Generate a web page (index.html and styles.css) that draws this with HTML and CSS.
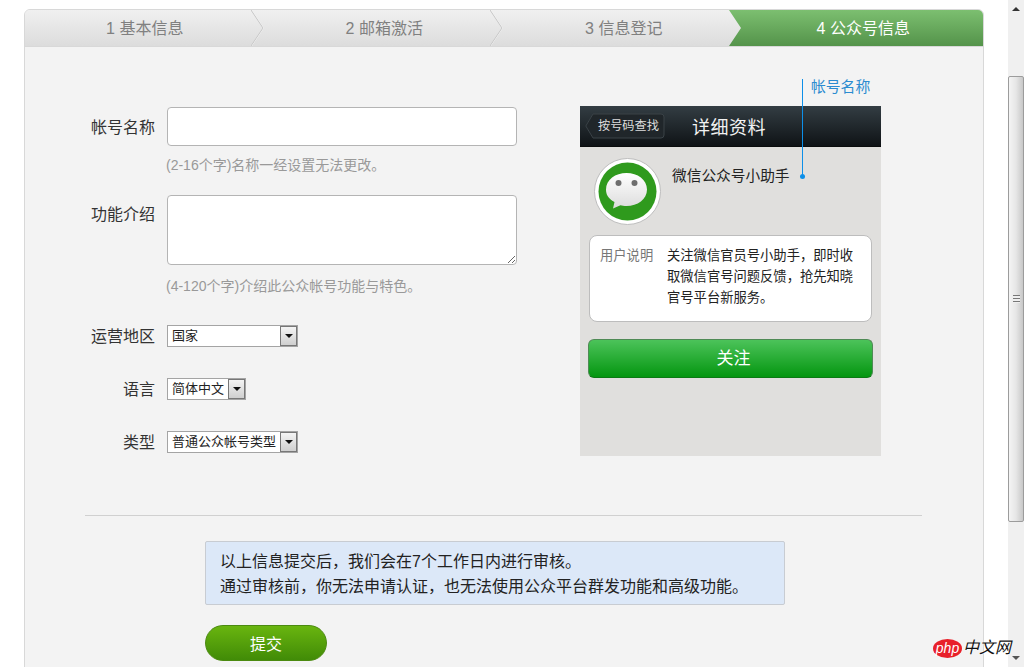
FILE: index.html
```html
<!DOCTYPE html>
<html lang="zh-CN">
  <head>
    <meta charset="UTF-8" />
    <meta name="viewport" content="width=device-width, initial-scale=1.0" />
    <title>公众号信息</title>
    <link rel="stylesheet" href="styles.css">
  </head>
  <body>
    <div class="page">
      <div class="wrap">
        <div class="card">
          <!-- steps -->
          <div class="steps">
            <div class="step">1 基本信息
              <svg class="chevron" width="14" height="36" viewBox="0 0 14 36"><polyline points="0.5,0 12.5,18 0.5,36" fill="none" stroke="#f7f7f7" stroke-width="1"/><polyline points="0,0 12,18 0,36" fill="none" stroke="#c6c6c6" stroke-width="1"/></svg>
            </div>
            <div class="step">2 邮箱激活
              <svg class="chevron" width="14" height="36" viewBox="0 0 14 36"><polyline points="0.5,0 12.5,18 0.5,36" fill="none" stroke="#f7f7f7" stroke-width="1"/><polyline points="0,0 12,18 0,36" fill="none" stroke="#c6c6c6" stroke-width="1"/></svg>
            </div>
            <div class="step">3 信息登记</div>
            <div class="step step-active">4 公众号信息
              <svg class="notch" width="15" height="36" viewBox="0 0 15 36">
                <defs>
                  <linearGradient id="stepGreen" x1="0" y1="0" x2="0" y2="1">
                    <stop offset="0" stop-color="#7cbf70"/>
                    <stop offset="1" stop-color="#54934a"/>
                  </linearGradient>
                </defs>
                <polygon points="0,0 15,0 15,36 0,36 12,18" fill="url(#stepGreen)"/>
              </svg>
            </div>
          </div>

          <div class="card-body">
            <div class="columns">
              <form class="form">
                <div class="field field-name">
                  <label class="field-label">帐号名称</label>
                  <input class="text-input" type="text" />
                </div>
                <p class="hint hint-name">(2-16个字)名称一经设置无法更改。</p>
                <div class="field field-intro">
                  <label class="field-label">功能介绍</label>
                  <textarea class="text-area"></textarea>
                </div>
                <p class="hint hint-intro">(4-120个字)介绍此公众帐号功能与特色。</p>
                <div class="field field-select first-select">
                  <label class="field-label">运营地区</label>
                  <div class="select select-wide"><span class="select-text">国家</span><span class="select-btn"><i></i></span></div>
                </div>
                <div class="field field-select">
                  <label class="field-label">语言</label>
                  <div class="select"><span class="select-text">简体中文</span><span class="select-btn"><i></i></span></div>
                </div>
                <div class="field field-select">
                  <label class="field-label">类型</label>
                  <div class="select select-wide"><span class="select-text">普通公众帐号类型</span><span class="select-btn"><i></i></span></div>
                </div>
              </form>

              <!-- phone preview -->
              <div class="phone">
                <div class="callout">
                  <span class="callout-text">帐号名称</span>
                </div>
                <div class="phone-head">
                  <span class="back-btn">
                    <svg class="back-shape" width="80" height="26" viewBox="0 0 80 26"><path d="M8 1H76a3 3 0 0 1 3 3V22a3 3 0 0 1-3 3H8L0.8 13Z" fill="#20262a" stroke="#3a4247"/></svg>
                    <span class="back-text">按号码查找</span>
                  </span>
                  <span class="phone-title">详细资料</span>
                </div>
                <div class="phone-body">
                  <div class="profile">
                    <svg class="avatar" width="67" height="67" viewBox="0 0 67 67">
                      <defs>
                        <linearGradient id="bubble" x1="0" y1="0" x2="0" y2="1">
                          <stop offset="0" stop-color="#ffffff"/>
                          <stop offset="1" stop-color="#dcdcdc"/>
                        </linearGradient>
                      </defs>
                      <circle cx="33.5" cy="33.5" r="33" fill="#fff" stroke="#bdbdbd"/>
                      <circle cx="33.5" cy="33.5" r="29" fill="#2f9a1d"/>
                      <path d="M19 50.5 L20.5 44 C14 40.5 12 36.5 12 31.5 C12 21.5 21.5 15 32.5 15 C43.5 15 53 21.5 53 31.5 C53 41.5 43.5 48 32.5 48 C30 48 28 47.8 26.5 47.3 Z" fill="url(#bubble)"/>
                      <circle cx="24.5" cy="25" r="3" fill="#6e6e6e"/>
                      <circle cx="40.5" cy="25" r="3" fill="#6e6e6e"/>
                    </svg>
                    <span class="profile-name">微信公众号小助手</span>
                  </div>
                  <div class="desc">
                    <span class="desc-label">用户说明</span>
                    <p class="desc-text">关注微信官员号小助手，即时收取微信官号问题反馈，抢先知晓官号平台新服务。</p>
                  </div>
                  <div class="follow-btn">关注</div>
                </div>
              </div>
            </div>

            <div class="divider"></div>

            <div class="notice">
              <p>以上信息提交后，我们会在7个工作日内进行审核。</p>
              <p>通过审核前，你无法申请认证，也无法使用公众平台群发功能和高级功能。</p>
            </div>
            <button class="submit-btn" type="button">提交</button>
          </div>
        </div>
      </div>

      <!-- window scrollbar -->
      <div class="scrollbar">
        <span class="scroll-up"></span>
        <div class="scroll-thumb"><span class="grip"></span></div>
        <span class="scroll-down"></span>
      </div>

      <div class="watermark">
        <span class="wm-php">php</span><span class="wm-cn">中文网</span>
      </div>
    </div>
  </body>
</html>
```

FILE: styles.css
```css
html,
body {
  margin: 0;
  height: 100%;
  overflow: hidden;
}

body {
  font-family: "Liberation Sans", "Noto Sans CJK SC", sans-serif;
  color: #333;
}

p {
  margin: 0;
}

.page {
  display: flex;
  height: 667px;
  position: relative;
  overflow: hidden;
  background-color: #fff;
  background-image: radial-gradient(circle at 1px 1px, #e2e2e2 0.5px, transparent 0.7px);
  background-size: 10px 10px;
}

.wrap {
  flex: 1;
  padding: 9px 24px 0 24px;
}

.card {
  height: 700px;
  background: #f3f3f3;
  border: 1px solid #d8d8d8;
  border-radius: 6px 6px 0 0;
  overflow: hidden;
}

/* steps */
.steps {
  display: grid;
  grid-template-columns: repeat(4, 1fr);
  grid-template-rows: 36px;
  border-bottom: 1px solid #d8d8d8;
}

.step {
  position: relative;
  box-sizing: border-box;
  height: 36px;
  padding-top: 1px;
  text-align: center;
  line-height: 36px;
  font-size: 16px;
  color: #808080;
  background: linear-gradient(#f0f0f0, #dcdcdc);
}

.step-active {
  color: #fff;
  background: linear-gradient(#7cbf70, #54934a);
}

.chevron {
  position: absolute;
  top: 0;
  right: 0;
}

.notch {
  position: absolute;
  top: 0;
  left: -15px;
}

/* form */
.card-body {
  padding: 59px 0 0 60px;
}

.columns {
  display: flex;
}

.form {
  width: 495px;
  margin: 1px 0 0;
}

.field {
  display: flex;
  gap: 12px;
}

.field-label {
  width: 70px;
  text-align: right;
  font-size: 16px;
  color: #333;
  flex: none;
}

.field-name .field-label {
  line-height: 41px;
}

.field-intro .field-label {
  line-height: 40px;
}

.text-input {
  width: 350px;
  height: 39px;
  box-sizing: border-box;
  border: 1px solid #b4b4b4;
  border-radius: 4px;
  background: #fff;
  padding: 0 8px;
}

.text-area {
  display: block;
  width: 350px;
  height: 70px;
  box-sizing: border-box;
  border: 1px solid #b4b4b4;
  border-radius: 4px;
  background: #fff;
  padding: 4px 8px;
  margin: 0;
}

.hint {
  margin-left: 81px;
  font-size: 14px;
  line-height: 20px;
  color: #999;
}

.hint-name {
  margin-top: 7px;
  margin-bottom: 20px;
}

.hint-intro {
  margin-top: 11px;
  margin-bottom: 20px;
}

.field-select {
  margin-bottom: 31px;
  align-items: center;
}

.first-select {
  margin-top: 29px;
}

.field-select .field-label {
  line-height: 24px;
  height: 22px;
}

.select {
  display: flex;
  height: 22px;
  box-sizing: border-box;
  border: 1px solid #a4a4a4;
  background: #fff;
}

.select-wide {
  width: 131px;
}

.select-text {
  flex: 1;
  padding: 0 4px;
  font-size: 13px;
  line-height: 20px;
  color: #222;
  white-space: nowrap;
}

.select-btn {
  flex: none;
  width: 17px;
  display: flex;
  align-items: center;
  justify-content: center;
  background: linear-gradient(#f4f4f4, #cfcfcf);
  border: 1px solid #777;
  box-sizing: border-box;
}

.select-btn i {
  width: 0;
  height: 0;
  border-left: 4px solid transparent;
  border-right: 4px solid transparent;
  border-top: 4px solid #111;
}

/* phone preview */
.phone {
  position: relative;
  width: 301px;
  height: 350px;
  background: #e0dfdd;
}

.callout {
  position: absolute;
  left: 222px;
  top: -27px;
  width: 1px;
  height: 98px;
  background: #0d8fe8;
}

.callout::after {
  content: "";
  position: absolute;
  left: -2px;
  bottom: -2px;
  width: 5px;
  height: 5px;
  border-radius: 50%;
  background: #0d8fe8;
}

.callout-text {
  position: absolute;
  left: 9px;
  top: -2px;
  line-height: 20px;
  font-size: 14.8px;
  white-space: nowrap;
  color: #2a8bd0;
}

.phone-head {
  display: flex;
  align-items: center;
  height: 41px;
  box-sizing: border-box;
  padding-left: 5px;
  background: linear-gradient(#333d43, #0f1316);
  border-bottom: 1px solid #0a0c0d;
}

.back-btn {
  position: relative;
  display: block;
  width: 80px;
  height: 26px;
}

.back-shape {
  position: absolute;
  left: 0;
  top: 0;
}

.back-text {
  position: absolute;
  left: 13px;
  top: 0;
  line-height: 26px;
  font-size: 12.2px;
  color: #ddd;
  white-space: nowrap;
}

.phone-title {
  margin-left: 27px;
  font-size: 18px;
  letter-spacing: 0.5px;
  color: #f2f2f2;
}

.phone-body {
  padding: 11px 8px 0;
}

.profile {
  display: flex;
  gap: 11px;
  height: 77px;
  padding-left: 6px;
}

.avatar {
  flex: none;
}

.profile-name {
  font-size: 14.7px;
  line-height: 36px;
  color: #222;
}

.desc {
  display: flex;
  box-sizing: border-box;
  width: 283px;
  height: 87px;
  margin-left: 1px;
  padding: 9px 10px 0;
  background: #fff;
  border: 1px solid #bdbdbd;
  border-radius: 8px;
  font-size: 13.3px;
  line-height: 21px;
}

.desc-label {
  flex: none;
  width: 67px;
  color: #777;
}

.desc-text {
  width: 188px;
  color: #222;
}

.follow-btn {
  height: 39px;
  margin-top: 17px;
  padding-left: 6px;
  box-sizing: border-box;
  text-align: center;
  line-height: 38px;
  font-size: 17px;
  color: #fff;
  background: linear-gradient(#4cc35a, #049610);
  border: 1px solid #4f8a55;
  border-bottom-color: #0b7a14;
  border-radius: 6px;
}

/* bottom */
.divider {
  width: 837px;
  height: 1px;
  margin-top: 31px;
  background: #d0d0d0;
}

.notice {
  box-sizing: border-box;
  width: 580px;
  height: 64px;
  margin: 25px 0 0 120px;
  padding: 7px 14px 0;
  background: #dce8f8;
  border: 1px solid #c8ccd2;
  border-radius: 2px;
  font-size: 16px;
  line-height: 25px;
  color: #222;
}

.submit-btn {
  display: block;
  width: 122px;
  height: 36px;
  margin: 20px 0 0 120px;
  padding: 0;
  border: 1px solid #4b8a10;
  border-radius: 18px;
  background: linear-gradient(#69b50f, #418b07);
  color: #fff;
  font-family: inherit;
  font-size: 16px;
}

/* scrollbar */
.scrollbar {
  flex: none;
  width: 16px;
  display: flex;
  flex-direction: column;
  align-items: center;
  background: #f0f0f0;
}

.scroll-up {
  width: 0;
  height: 0;
  margin-top: 7px;
  border-left: 4px solid transparent;
  border-right: 4px solid transparent;
  border-bottom: 4px solid #333;
}

.scroll-thumb {
  display: flex;
  align-items: center;
  justify-content: center;
  width: 100%;
  height: 446px;
  margin-top: 65px;
  box-sizing: border-box;
  border: 1px solid #9c9c9c;
  border-radius: 2px;
  background: linear-gradient(to right, #f4f4f4, #e6e6e6 50%, #c8c8c8);
}

.grip {
  width: 7px;
  height: 8px;
  background: repeating-linear-gradient(#777 0, #777 1px, #eee 1px, #eee 3px);
}

.scroll-down {
  width: 0;
  height: 0;
  margin-top: 134px;
  border-left: 4px solid transparent;
  border-right: 4px solid transparent;
  border-top: 4px solid #555;
}

/* watermark in the corner, sits on top of the page */
.watermark {
  position: absolute;
  left: 933px;
  top: 638px;
  display: flex;
  align-items: center;
  height: 20px;
}

.wm-php {
  width: 29px;
  height: 19px;
  border-radius: 50%;
  background: #e8202a;
  color: #fff;
  font-style: italic;
  font-size: 14px;
  line-height: 18px;
  text-align: center;
}

.wm-cn {
  margin-left: 1px;
  font-size: 16px;
  font-weight: 400;
  font-style: italic;
  line-height: 20px;
  color: #111;
  text-shadow: 0 0 2px #fff;
}
```
